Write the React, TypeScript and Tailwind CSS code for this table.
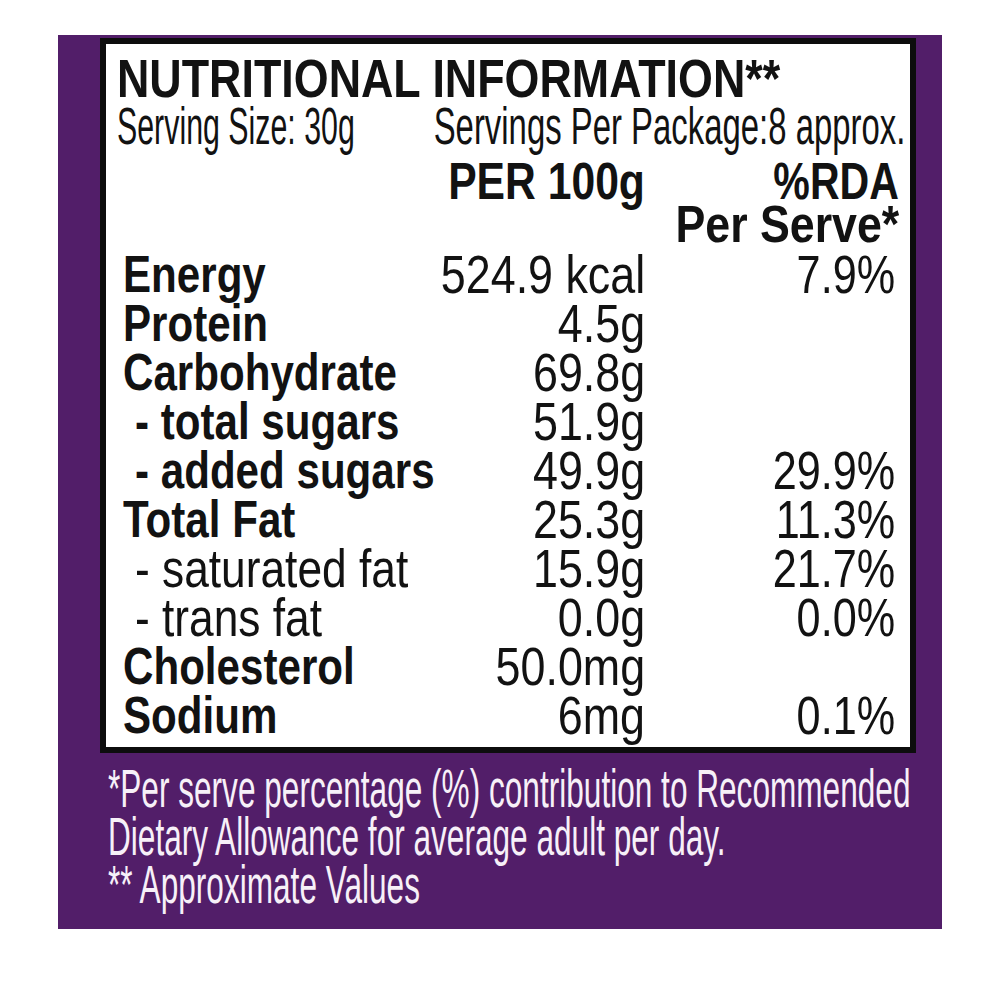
import React from "react";

type Row = {
  label: string;
  bold?: boolean;
  indent?: boolean;
  value: string;
  rda?: string;
};

const rows: Row[] = [
  { label: "Energy", bold: true, value: "524.9 kcal", rda: "7.9%" },
  { label: "Protein", bold: true, value: "4.5g" },
  { label: "Carbohydrate", bold: true, value: "69.8g" },
  { label: "- total sugars", bold: true, indent: true, value: "51.9g" },
  { label: "- added sugars", bold: true, indent: true, value: "49.9g", rda: "29.9%" },
  { label: "Total Fat", bold: true, value: "25.3g", rda: "11.3%" },
  { label: "- saturated fat", indent: true, value: "15.9g", rda: "21.7%" },
  { label: "- trans fat", indent: true, value: "0.0g", rda: "0.0%" },
  { label: "Cholesterol", bold: true, value: "50.0mg" },
  { label: "Sodium", bold: true, value: "6mg", rda: "0.1%" },
];

// condensed look: the label face is a narrow grotesk, so squeeze Liberation Sans sideways
function LeftCell({ children, className }: { children: React.ReactNode; className: string }) {
  return (
    <div className="flex min-w-0 justify-start">
      <span className={"inline-block shrink-0 origin-left whitespace-nowrap " + className}>
        {children}
      </span>
    </div>
  );
}

function RightCell({ children, className }: { children: React.ReactNode; className: string }) {
  return (
    <div className="flex min-w-0 justify-end">
      <span className={"inline-block shrink-0 origin-right whitespace-nowrap " + className}>
        {children}
      </span>
    </div>
  );
}

export default function App() {
  return (
    <div className="min-h-[1000px] bg-white pt-[35px] pl-[58px] font-['Liberation_Sans',Arial,sans-serif]">
      <div className="h-[894px] w-[884px] bg-[#521e69] pt-[3px]">
        {/* Label box */}
        <div className="ml-[42px] h-[715px] w-[816px] border-[6px] border-[#0d0d0d] bg-white pl-[11px] pr-[5px] pt-[9px] text-[#121212]">
          <h1 className="origin-left scale-x-[0.83] whitespace-nowrap text-[54px] font-bold leading-[50px]">
            NUTRITIONAL INFORMATION**
          </h1>

          <div className="grid grid-cols-2 text-[51px] leading-[48px]">
            <LeftCell className="scale-x-[0.595]">Serving Size: 30g</LeftCell>
            <RightCell className="scale-x-[0.645]">Servings Per Package:8 approx.</RightCell>
          </div>

          {/* Column headings */}
          <div className="mt-[9px] grid grid-cols-[292px_230px_1fr] pl-[6px] pr-[6px] text-[52px] font-bold leading-[43px]">
            <div />
            <RightCell className="scale-x-[0.82]">PER 100g</RightCell>
            <RightCell className="scale-x-[0.79]">%RDA</RightCell>
            <div />
            <div />
            <RightCell className="scale-x-[0.86]">Per Serve*</RightCell>
          </div>

          {/* Values */}
          <div className="mt-[4px] pl-[6px] pr-[10px]">
            {rows.map((r) => (
              <div
                key={r.label}
                className="grid h-[49px] grid-cols-[292px_230px_1fr] leading-[49px]"
              >
                <div className={r.indent ? "pl-[12px]" : ""}>
                  {r.bold ? (
                    <LeftCell className="scale-x-[0.81] text-[52px] font-bold">{r.label}</LeftCell>
                  ) : (
                    <LeftCell className="scale-x-[0.82] text-[54px]">{r.label}</LeftCell>
                  )}
                </div>
                <RightCell className="scale-x-[0.83] text-[54px]">{r.value}</RightCell>
                <RightCell className="scale-x-[0.8] text-[54px]">{r.rda}</RightCell>
              </div>
            ))}
          </div>
        </div>

        {/* Footnote */}
        <div className="mt-[11px] pl-[50px] text-[54px] leading-[48px] text-[#f7f0f8]">
          <div className="origin-left scale-x-[0.585] whitespace-nowrap">
            *Per serve percentage (%) contribution to Recommended
          </div>
          <div className="origin-left scale-x-[0.585] whitespace-nowrap">
            Dietary Allowance for average adult per day.
          </div>
          <div className="origin-left scale-x-[0.585] whitespace-nowrap">
            ** Approximate Values
          </div>
        </div>
      </div>
    </div>
  );
}
